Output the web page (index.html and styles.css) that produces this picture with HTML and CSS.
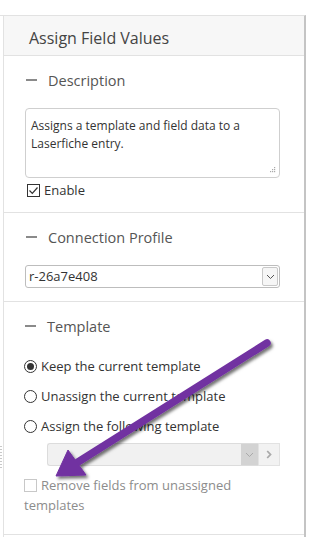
FILE: index.html
```html
<!DOCTYPE html>
<html lang="en">
<head>
  <meta charset="UTF-8" />
  <title>Assign Field Values</title>
  <link rel="stylesheet" href="styles.css">
</head>
<body>
  <div class="frame">
    <div class="panel">
      <div class="panel-head">Assign Field Values</div>

      <section class="group">
        <h3 class="group-title"><span class="dash"></span>Description</h3>
        <div class="textbox">
          Assigns a template and field data to a Laserfiche entry.
          <svg class="grip" width="7" height="7" viewBox="0 0 7 7"><g fill="#aaa"><rect x="5" y="0" width="1.2" height="1.2"/><rect x="3" y="2" width="1.2" height="1.2"/><rect x="5" y="2" width="1.2" height="1.2"/><rect x="1" y="4" width="1.2" height="1.2"/><rect x="3" y="4" width="1.2" height="1.2"/><rect x="5" y="4" width="1.2" height="1.2"/></g></svg>
        </div>
        <label class="check">
          <span class="box"><svg width="11" height="11" viewBox="0 0 11 11"><path d="M1.5 5.5 L4.3 8.3 L9.5 2.5" fill="none" stroke="#333" stroke-width="1.2"/></svg></span>
          Enable
        </label>
      </section>

      <section class="group group-profile">
        <h3 class="group-title"><span class="dash"></span>Connection Profile</h3>
        <div class="select">
          <span class="select-value">r-26a7e408</span>
          <span class="select-btn"><svg width="9" height="6" viewBox="0 0 9 6"><path d="M1 1 L4.5 4.5 L8 1" fill="none" stroke="#555" stroke-width="1"/></svg></span>
        </div>
      </section>

      <section class="group group-template">
        <h3 class="group-title"><span class="dash"></span>Template</h3>
        <ul class="radios">
          <li><span class="radio on"></span>Keep the current template</li>
          <li><span class="radio"></span>Unassign the current template</li>
          <li><span class="radio"></span>Assign the following template</li>
        </ul>
        <div class="picker">
          <div class="picker-field"><span class="picker-drop"><svg width="9" height="6" viewBox="0 0 9 6"><path d="M1 1 L4.5 4.5 L8 1" fill="none" stroke="#aaa" stroke-width="1"/></svg></span></div>
          <span class="picker-next"><svg width="6" height="9" viewBox="0 0 6 9"><path d="M1.2 1 L4.5 4.5 L1.2 8" fill="none" stroke="#aaa" stroke-width="1.8"/></svg></span>
        </div>
        <div class="check check-off">
          <span class="box"></span>Remove fields from unassigned templates
        </div>
      </section>
    </div>
  </div>

  <span class="side-grip"></span>

  <svg class="arrow" width="309" height="537" viewBox="0 0 309 537">
    <defs>
      <filter id="shade" x="-20%" y="-20%" width="140%" height="140%">
        <feDropShadow dx="2" dy="2.5" stdDeviation="1.6" flood-color="#000" flood-opacity="0.55"/>
      </filter>
    </defs>
    <g filter="url(#shade)" fill="#7131a1" stroke="#7131a1">
      <line x1="267" y1="343" x2="78" y2="462" stroke-width="7.5" stroke-linecap="round"/>
      <polygon points="56,476 68,450 86,475" stroke-width="1" stroke-linejoin="round"/>
    </g>
  </svg>
</body>
</html>
```

FILE: styles.css
```css
* {
  box-sizing: border-box;
}
body {
  margin: 0;
  width: 309px;
  height: 537px;
  overflow: hidden;
  background: #ffffff;
  font-family: "Open Sans", "Liberation Sans", sans-serif;
  color: #333;
  position: relative;
}
.frame {
  margin-top: 15px;
  width: 306px;
  height: 522px;
  border-top: 1px solid #e2e2e2;
  border-right: 2px solid #c4c4c4;
}
.panel {
  margin-left: 3px;
  height: 100%;
  border-left: 1px solid #e2e2e2;
}
.panel-head {
  height: 40px;
  padding-left: 25px;
  background: #f7f7f7;
  border-bottom: 1px solid #e2e2e2;
  font-size: 16px;
  line-height: 44px;
  color: #444;
}
.group {
  padding: 14px 24px 14px 21px;
  border-bottom: 1px solid #e2e2e2;
}
.group-title {
  margin: 0;
  display: flex;
  align-items: center;
  height: 20px;
  font-size: 14.5px;
  font-weight: 400;
  color: #555;
}
.dash {
  width: 11px;
  height: 2px;
  margin: 0 11px 0 1px;
  background: #8a8a8a;
}
.textbox {
  position: relative;
  margin-top: 18px;
  height: 70px;
  padding: 8px 6px 0 5px;
  border: 1px solid #cfcfcf;
  border-radius: 4px;
  font-size: 12px;
  line-height: 18px;
  color: #333;
}
.grip {
  position: absolute;
  right: 3px;
  bottom: 3px;
}
.check {
  display: flex;
  align-items: center;
  gap: 4px;
  margin-top: 4px;
  height: 16px;
  padding-left: 2px;
  font-size: 13px;
  color: #333;
}
.box {
  flex: none;
  display: flex;
  align-items: center;
  justify-content: center;
  width: 13px;
  height: 13px;
  border: 1px solid #333;
  background: #fff;
}
.group-profile {
  padding: 14px 24px 13px 21px;
}
.select {
  display: flex;
  margin-top: 18px;
  height: 23px;
  border: 1px solid #bdbdbd;
  border-radius: 3px;
  font-size: 13px;
}
.select-value {
  flex: 1;
  padding-left: 3px;
  line-height: 21px;
  color: #333;
}
.select-btn {
  display: flex;
  align-items: center;
  justify-content: center;
  width: 16px;
  margin: 1px 1px 1px 0;
  border: 1px solid #c8c8c8;
  border-radius: 2px;
  background: #f6f6f6;
}
.group-template {
  padding: 14px 24px 19px 20px;
}
.radios {
  list-style: none;
  margin: 20px 0 0;
  padding: 0;
}
.radios li {
  display: flex;
  align-items: center;
  gap: 4px;
  height: 20px;
  margin-bottom: 10px;
  font-size: 13px;
  color: #333;
}
.radios li:last-child {
  margin-bottom: 0;
}
.radio {
  flex: none;
  width: 13px;
  height: 13px;
  border: 1px solid #333;
  border-radius: 50%;
  background: #fff;
  display: flex;
  align-items: center;
  justify-content: center;
}
.radio.on::after {
  content: "";
  width: 7px;
  height: 7px;
  border-radius: 50%;
  background: #333;
}
.picker {
  display: flex;
  margin: 7px 0 0 23px;
  height: 23px;
}
.picker-field {
  flex: 1;
  display: flex;
  justify-content: flex-end;
  border: 1px solid #dcdcdc;
  border-right: none;
  border-radius: 3px 0 0 3px;
  background: #f1f1f1;
}
.picker-drop {
  display: flex;
  align-items: center;
  justify-content: center;
  width: 17px;
  background: #d3d3d3;
}
.picker-next {
  display: flex;
  align-items: center;
  justify-content: center;
  width: 22px;
  border: 1px solid #e2e2e2;
  background: #f2f2f2;
}
.check-off {
  display: block;
  height: auto;
  margin-top: 9px;
  padding-left: 0;
  line-height: 20px;
  color: #8c8c8c;
}
.check-off .box {
  display: inline-block;
  vertical-align: -2px;
  margin-right: 4px;
  border-color: #c8c8c8;
}
.side-grip {
  position: absolute;
  left: 0;
  top: 446px;
  width: 2px;
  height: 24px;
  background: repeating-linear-gradient(#c8c8c8 0 1px, transparent 1px 3px);
}
.arrow {
  position: absolute;
  left: 0;
  top: 0;
  pointer-events: none;
}
```
